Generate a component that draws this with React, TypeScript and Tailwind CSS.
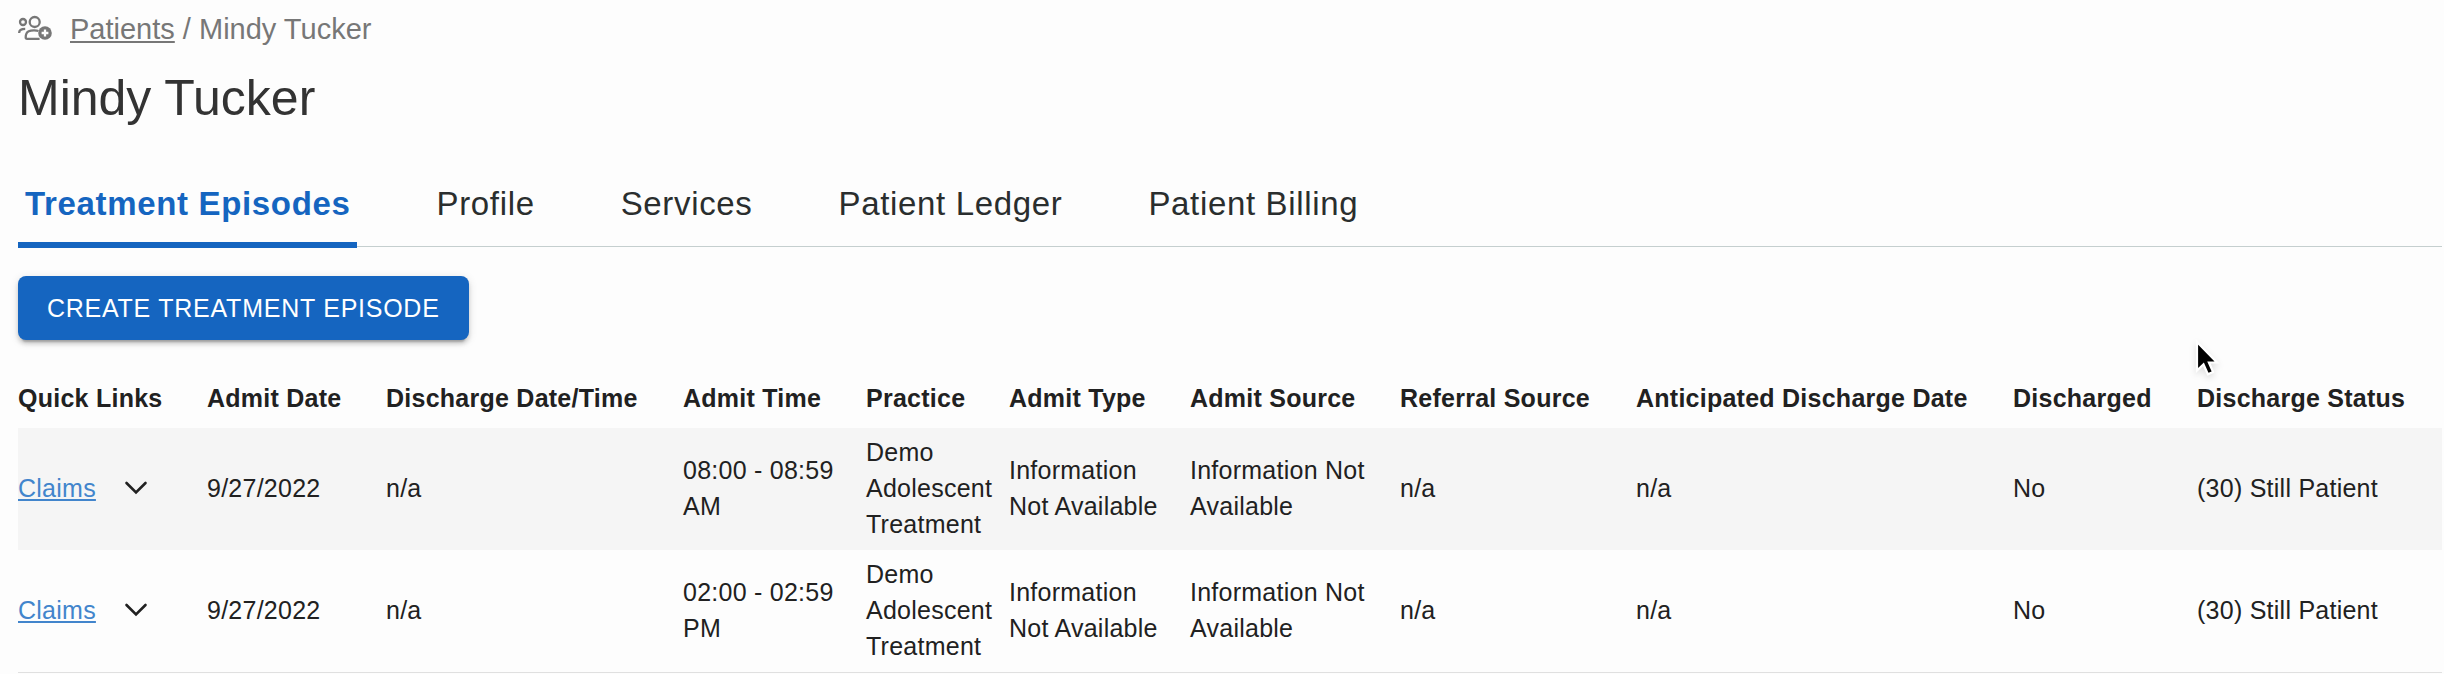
import { clsx } from "clsx";

const tabs = ["Treatment Episodes", "Profile", "Services", "Patient Ledger", "Patient Billing"];

const columns = [
  { label: "Quick Links", width: "w-[189px]" },
  { label: "Admit Date", width: "w-[179px]" },
  { label: "Discharge Date/Time", width: "w-[297px]" },
  { label: "Admit Time", width: "w-[183px]" },
  { label: "Practice", width: "w-[143px]" },
  { label: "Admit Type", width: "w-[181px]" },
  { label: "Admit Source", width: "w-[210px]" },
  { label: "Referral Source", width: "w-[236px]" },
  { label: "Anticipated Discharge Date", width: "w-[377px]" },
  { label: "Discharged", width: "w-[184px]" },
  { label: "Discharge Status", width: "w-[245px]" },
];

const episodes = [
  {
    admitDate: "9/27/2022",
    dischargeDate: "n/a",
    admitTime: "08:00 - 08:59 AM",
    practice: "Demo Adolescent Treatment",
    admitType: "Information Not Available",
    admitSource: "Information Not Available",
    referralSource: "n/a",
    anticipatedDischarge: "n/a",
    discharged: "No",
    status: "(30) Still Patient",
  },
  {
    admitDate: "9/27/2022",
    dischargeDate: "n/a",
    admitTime: "02:00 - 02:59 PM",
    practice: "Demo Adolescent Treatment",
    admitType: "Information Not Available",
    admitSource: "Information Not Available",
    referralSource: "n/a",
    anticipatedDischarge: "n/a",
    discharged: "No",
    status: "(30) Still Patient",
  },
];

function PatientsIcon() {
  return (
    <svg viewBox="0 0 36 28" className="h-7 w-9 shrink-0" fill="none" stroke="currentColor" strokeWidth="2.3" aria-hidden="true">
      <circle cx="5" cy="7" r="3" />
      <circle cx="16.7" cy="7" r="5" />
      <path d="M1.2 18v-.5c0-2.4 1.8-3.700 6-3.700" />
      <path d="M20.5 16c-2-.8-7-1-9.8.3-2.4 1.2-3 3.200-3 6 0 1 .4 1.5 1.4 1.5h12.5" />
      <circle cx="27" cy="18" r="6.8" fill="currentColor" stroke="none" />
      <path d="M27 14.6v6.8M23.6 18h6.8" stroke="#fdfdfd" />
    </svg>
  );
}

function ChevronIcon() {
  return (
    <svg viewBox="0 0 24 14" className="h-3.5 w-6" fill="none" stroke="currentColor" strokeWidth="2.6" strokeLinecap="round" aria-hidden="true">
      <path d="M2.5 2 12 11.500 21.500 2" />
    </svg>
  );
}

function Pointer() {
  return (
    <svg
      viewBox="0 0 26 40"
      className="pointer-events-none absolute top-[339px] left-[2194px] h-10 w-[26px] drop-shadow-md"
      aria-hidden="true"
    >
      <path d="M3 3v28.500l6.500-6.200 4.400 10 5.200-2.300-4.200-9.500H23z" fill="#000" stroke="#fff" strokeWidth="2.2" />
    </svg>
  );
}

function EpisodeTable() {
  return (
    <table className="mt-7 w-full table-fixed text-left text-[25px] leading-9 tracking-[0.01em] text-[#212121]">
      <thead>
        <tr>
          {columns.map((col) => (
            <th key={col.label} scope="col" className={clsx("py-3 font-bold whitespace-nowrap", col.width)}>
              {col.label}
            </th>
          ))}
        </tr>
      </thead>
      <tbody>
        {episodes.map((episode, idx) => (
          <tr key={idx} className="odd:bg-[#f5f5f5] even:border-b even:border-[#e0e0e0]">
            <td className="pt-1.5 pb-2">
              <div className="flex items-center gap-7">
                <a href="#claims" className="text-[#4285cc] underline decoration-2 underline-offset-2">
                  Claims
                </a>
                <button type="button" aria-label="More links">
                  <ChevronIcon />
                </button>
              </div>
            </td>
            {Object.entries(episode).map(([key, value]) => (
              <td key={key} className="pt-1.5 pr-4 pb-2">
                {value}
              </td>
            ))}
          </tr>
        ))}
      </tbody>
    </table>
  );
}

export default function App() {
  return (
    <div className="relative min-h-screen bg-[#fdfdfd] pt-[11px] pr-0.5 pl-[18px] font-['Liberation_Sans',Arial,sans-serif]">
      <nav aria-label="Breadcrumb" className="flex items-center gap-4 text-[29px] leading-9 text-[#777]">
        <PatientsIcon />
        <div>
          <a href="#patients" className="underline decoration-2 underline-offset-2">
            Patients
          </a>{" "}
          / Mindy Tucker
        </div>
      </nav>

      <h1 className="mt-[21px] text-[50px] leading-[60px] text-[#333]">Mindy Tucker</h1>

      <div role="tablist" className="mt-9 flex gap-[72px] border-b border-[#c5cfcf]">
        {tabs.map((tab, idx) => (
          <button
            key={tab}
            type="button"
            role="tab"
            aria-selected={idx === 0}
            className={clsx(
              "-mb-0.5 border-b-6 px-[7px] pt-5 pb-[18px] text-[33px] leading-10 tracking-[0.02em]",
              idx === 0 ? "border-[#1565c0] font-bold text-[#1565c0]" : "border-transparent text-[#2a2e2e]"
            )}
          >
            {tab}
          </button>
        ))}
      </div>

      <button
        type="button"
        className="mt-[29px] rounded-lg bg-[#1565c0] px-[29px] py-3.5 text-[25px] leading-9 tracking-[0.03em] text-white uppercase shadow-[0_6px_2px_-4px_rgba(0,0,0,0.2),0_4px_4px_rgba(0,0,0,0.14),0_2px_10px_rgba(0,0,0,0.12)]"
      >
        Create Treatment Episode
      </button>

      <EpisodeTable />
      <Pointer />
    </div>
  );
}
